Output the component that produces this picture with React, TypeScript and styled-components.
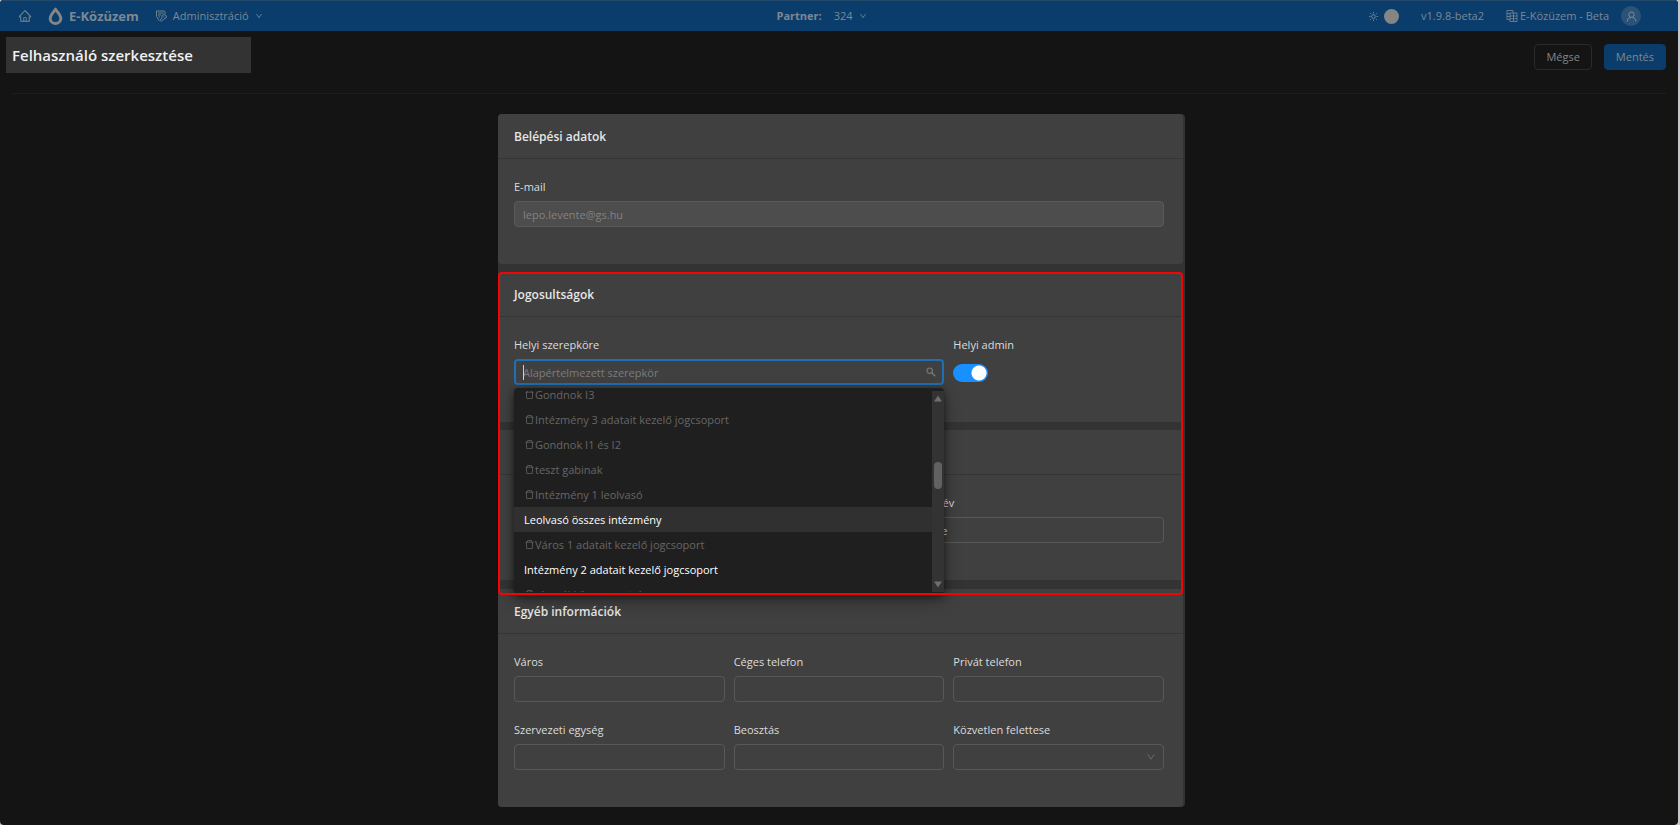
import React from "react";
import styled, { createGlobalStyle, css } from "styled-components";
import {
  AiOutlineHome,
  AiOutlineDelete,
  AiOutlineDown,
  AiOutlineUser,
} from "react-icons/ai";

const GlobalStyle = createGlobalStyle`
  *, *::before, *::after { box-sizing: border-box; }
  body {
    margin: 0;
    background: #c4c8cc;
    color: #d9d9d9;
    font: 12px/24px "Open Sans", "Noto Sans", sans-serif;
  }
  button, input, select { font: inherit; color: inherit; }
`;

const Page = styled.div`
  min-height: 100vh;
  margin-right: 2px;
  background: #141414;
  border-radius: 4px;
  overflow: hidden;
`;

const TopBar = styled.header`
  display: grid;
  grid-template-columns: 1fr auto 1fr;
  align-items: center;
  height: 31px;
  padding: 1px 37px 0 18px;
  background: #0a3d6b;
  box-shadow: inset 0 1px 0 #24496a;
  color: #7c8894;
`;

const BarGroup = styled.div<{ $gap: number; $end?: boolean }>`
  display: flex;
  align-items: center;
  gap: ${(p) => p.$gap}px;
  ${(p) => p.$end && css`justify-content: flex-end;`}
`;

const PartnerGroup = styled(BarGroup)`
  padding-right: 16px;
`;

const BarLink = styled.a`
  display: flex;
  align-items: center;
  gap: 2px;
  color: inherit;
  text-decoration: none;
  font-size: 11px;
  white-space: nowrap;
`;

const BarButton = styled.button`
  display: flex;
  align-items: center;
  gap: 6px;
  padding: 0;
  border: 0;
  background: none;
  font-size: 11px;
  line-height: 24px;
  white-space: nowrap;
`;

const Brand = styled(BarLink)`
  gap: 6px;
  font-size: 13px;
  font-weight: 700;
`;

const Avatar = styled.span`
  display: grid;
  place-items: center;
  width: 20px;
  height: 20px;
  border-radius: 50%;
  background: #2b5378;
`;

const ThemeKnob = styled.span`
  width: 15px;
  height: 15px;
  border-radius: 50%;
  background: #858585;
`;

const TitleRow = styled.div`
  display: flex;
  justify-content: space-between;
  align-items: flex-start;
  padding: 6px 12px 0 6px;
`;

const Title = styled.h1`
  width: 245px;
  margin: 0;
  padding: 0 6px;
  background: #333;
  color: #f0f0f0;
  font-size: 15px;
  line-height: 36px;
  font-weight: 600;
`;

const Actions = styled.div`
  display: flex;
  gap: 12px;
  padding-top: 7px;
`;

const ActionButton = styled.button<{ $primary?: boolean }>`
  height: 26px;
  padding: 0 11px;
  border: 1px solid ${(p) => (p.$primary ? "#0a3d6b" : "#2a2a2a")};
  border-radius: 4px;
  background: ${(p) => (p.$primary ? "#0a3d6b" : "#141414")};
  color: #838688;
  font-size: 11px;
  line-height: 24px;
`;

const Divider = styled.hr`
  height: 1px;
  margin: 20px 12px;
  border: 0;
  background: #1d1d1d;
`;

const Main = styled.main`
  padding: 0 12px 18px 17px;
`;

const FormPanel = styled.form`
  display: flex;
  flex-direction: column;
  gap: 8px;
  max-width: 687px;
  margin: 0 auto;
  padding-right: 2px;
  border-radius: 4px;
  background: #333;
`;

const Highlighted = styled.div`
  position: relative;
  display: flex;
  flex-direction: column;
  gap: 8px;
  padding-bottom: 1px;

  &::after {
    content: "";
    position: absolute;
    inset: 0 0 -14px 0;
    border: 2px solid #f40505;
    border-radius: 4px;
    pointer-events: none;
    z-index: 3;
  }
`;

const Card = styled.section`
  border-radius: 4px;
  background: #404040;
`;

const CardTitle = styled.h2`
  height: 45px;
  margin: 0;
  padding: 0 16px;
  border-bottom: 1px solid #353535;
  color: #e6e6e6;
  font-size: 12px;
  line-height: 46px;
  font-weight: 600;
`;

const Fields = styled.div<{ $columns?: string }>`
  display: grid;
  grid-template-columns: ${(p) => p.$columns ?? "repeat(3, 1fr)"};
  gap: 16px 9px;
  padding: 16px 19px 37px 16px;
`;

const Field = styled.div<{ $span?: number }>`
  position: relative;
  display: flex;
  flex-direction: column;
  gap: 2px;
  grid-column-end: span ${(p) => p.$span ?? 1};
`;

const LastField = styled(Field)`
  grid-column: 3;
`;

const Label = styled.label`
  font-size: 11px;
  line-height: 24px;
  color: #dcdcdc;
`;

const control = css`
  width: 100%;
  height: 26px;
  padding: 0 8px;
  border: 1px solid #585858;
  border-radius: 4px;
  background: #404040;
  outline: none;
  font-size: 11px;
  line-height: 24px;
`;

const TextInput = styled.input`
  ${control}
  &:disabled {
    background: #4d4d4d;
    border-color: #5a5a5a;
    color: #828282;
  }
`;

const SelectWrap = styled.div`
  display: grid;
  align-items: center;
  > * { grid-area: 1 / 1; }
  > svg {
    justify-self: end;
    margin-right: 8px;
    pointer-events: none;
    color: #777;
  }
`;

const Select = styled.select`
  ${control}
  appearance: none;
`;

const SearchInput = styled.input`
  ${control}
  border: 2px solid #1f6fb8;
  padding: 0 7px;
  line-height: 22px;
  &::placeholder { color: #7c7c7c; opacity: 1; }
`;

const Caret = styled.span`
  width: 1px;
  height: 15px;
  margin-left: 9px;
  background: #d0d0d0;
`;

const Switch = styled.input`
  appearance: none;
  width: 35px;
  height: 18px;
  margin: 5px 0 0;
  border-radius: 9px;
  background: radial-gradient(circle at 26px 9px, #fff 7px, transparent 8px) #1890ff;
`;

const Dropdown = styled.div`
  position: absolute;
  top: 55px;
  left: 0;
  right: 0;
  z-index: 2;
  display: flex;
  height: 206px;
  padding: 3px 0 2px;
  border-radius: 4px;
  background: #1f1f1f;
  box-shadow: 0 6px 16px rgba(0, 0, 0, 0.4), 0 2px 6px rgba(0, 0, 0, 0.4);
`;

const Options = styled.ul`
  flex: 1;
  display: flex;
  flex-direction: column;
  justify-content: flex-end;
  margin: 0;
  padding: 0;
  list-style: none;
  overflow: hidden;
`;

const Option = styled.li<{ $deleted?: boolean; $active?: boolean }>`
  display: flex;
  flex: none;
  align-items: center;
  height: 25px;
  padding: 0 10px;
  font-size: 11px;
  font-weight: ${(p) => (p.$deleted ? 400 : 500)};
  color: ${(p) => (p.$deleted ? "#666" : "#fff")};
  background: ${(p) => (p.$active ? "#303030" : "transparent")};

  &:last-child { margin-bottom: -15px; }
`;

const ScrollTrack = styled.div`
  display: flex;
  flex-direction: column;
  align-items: center;
  width: 12px;
  padding: 4px 0;
  background: #333;
`;

const ScrollThumb = styled.span`
  width: 8px;
  height: 27px;
  margin: 60px 0 auto;
  border-radius: 4px;
  background: #616161;
`;

const DropIcon = () => (
  <svg width="15" height="18" viewBox="0 0 15 18" aria-hidden="true">
    <path
      d="M7.5 2.2C5.600 5.200 2.200 8.300 2.200 11.400a5.300 5.100 0 0 0 10.600 0C12.800 8.300 9.400 5.200 7.500 2.200Z"
      fill="none"
      stroke="#858585"
      strokeWidth="3"
      strokeLinejoin="round"
    />
  </svg>
);

const AdminIcon = () => (
  <svg width="12" height="12" viewBox="0 0 12 12" fill="none" stroke="currentColor" strokeWidth="0.9" aria-hidden="true">
    <path d="M10 4V1.500L8.500 1H1.500v5.500L4 10.500M3 3h5.500M3 5h3M3.500 7h1.500" />
    <path d="M7 5.500 9 4.500l2.500 1.500-.5 2-2 1-3 2.500-1-1 2-3ZM8.500 6.500l1 .8" />
  </svg>
);

const SunIcon = () => (
  <svg width="9" height="9" viewBox="0 0 9 9" fill="none" stroke="currentColor" strokeWidth="0.9" aria-hidden="true">
    <circle cx="4.500" cy="4.500" r="1.800" />
    <path d="M4.500 0v1.500M4.500 7.500V9M0 4.500h1.500M7.500 4.500H9M1.200 1.200l1 1M6.800 6.800l1 1M1.200 7.800l1-1M6.800 2.200l1-1" />
  </svg>
);

const TenantIcon = () => (
  <svg width="12" height="12" viewBox="0 0 12 12" fill="none" stroke="currentColor" strokeWidth="0.8" aria-hidden="true">
    <path d="M4 9.500H1v-9h6V3M1 3.500h3M1 6.500h3M4 3h7v8.500H4ZM4 6h7M4 8.700h7M7.500 3v8.500" />
  </svg>
);

const SearchIcon = () => (
  <svg width="10" height="10" viewBox="0 0 10 10" fill="none" stroke="currentColor" aria-hidden="true">
    <circle cx="3.700" cy="3.700" r="2.700" strokeWidth="1.200" />
    <path d="M5.800 5.800 9.200 9.200" strokeWidth="1.500" />
  </svg>
);

const ArrowIcon = ({ down }: { down?: boolean }) => (
  <svg width="8" height="7" viewBox="0 0 8 7" aria-hidden="true">
    <path d={down ? "M0 0.500h8L4 6.500Z" : "M0 6.500h8L4 0.500Z"} fill="#6e6e6e" />
  </svg>
);

const roles = [
  { name: "Gondnok I3", deleted: true },
  { name: "Intézmény 3 adatait kezelő jogcsoport", deleted: true },
  { name: "Gondnok I1 és I2", deleted: true },
  { name: "teszt gabinak", deleted: true },
  { name: "Intézmény 1 leolvasó", deleted: true },
  { name: "Leolvasó összes intézmény", active: true },
  { name: "Város 1 adatait kezelő jogcsoport", deleted: true },
  { name: "Intézmény 2 adatait kezelő jogcsoport" },
  { name: "olvasói kör csoportok", deleted: true },
];

const TextField = ({ id, label, ...rest }: { id: string; label: string } & React.ComponentProps<"input">) => (
  <Field>
    <Label htmlFor={id}>{label}</Label>
    <TextInput id={id} {...rest} />
  </Field>
);

export default function App() {
  return (
    <>
      <GlobalStyle />
      <Page>
        <TopBar>
          <BarGroup $gap={16}>
            <BarLink href="#" aria-label="Kezdőlap"><AiOutlineHome size={14} /></BarLink>
            <Brand href="#"><DropIcon />E-Közüzem</Brand>
            <BarButton><AdminIcon />Adminisztráció<AiOutlineDown size={8} /></BarButton>
          </BarGroup>
          <PartnerGroup $gap={12}>
            <BarLink as="strong">Partner:</BarLink>
            <BarButton>324<AiOutlineDown size={8} /></BarButton>
          </PartnerGroup>
          <BarGroup $gap={22} $end>
            <BarButton aria-label="Téma"><SunIcon /><ThemeKnob /></BarButton>
            <BarLink href="#">v1.9.8-beta2</BarLink>
            <BarGroup $gap={12}>
              <BarLink href="#"><TenantIcon />E-Közüzem - Beta</BarLink>
              <Avatar><AiOutlineUser size={13} /></Avatar>
            </BarGroup>
          </BarGroup>
        </TopBar>

        <TitleRow>
          <Title>Felhasználó szerkesztése</Title>
          <Actions>
            <ActionButton>Mégse</ActionButton>
            <ActionButton $primary>Mentés</ActionButton>
          </Actions>
        </TitleRow>
        <Divider />

        <Main>
          <FormPanel>
            <Card>
              <CardTitle>Belépési adatok</CardTitle>
              <Fields>
                <Field $span={3}>
                  <Label htmlFor="email">E-mail</Label>
                  <TextInput id="email" type="email" defaultValue="lepo.levente@gs.hu" disabled />
                </Field>
              </Fields>
            </Card>

            <Highlighted>
              <Card>
                <CardTitle>Jogosultságok</CardTitle>
                <Fields>
                  <Field $span={2}>
                    <Label htmlFor="role">Helyi szerepköre</Label>
                    <SelectWrap>
                      <SearchInput id="role" role="combobox" aria-expanded="true" aria-controls="roles" placeholder="Alapértelmezett szerepkör" />
                      <Caret />
                      <SearchIcon />
                    </SelectWrap>
                    <Dropdown>
                      <Options id="roles" role="listbox">
                        {roles.map((r) => (
                          <Option key={r.name} role="option" aria-selected={!!r.active} $deleted={r.deleted} $active={r.active}>
                            {r.deleted && <AiOutlineDelete size={11} />}
                            {r.name}
                          </Option>
                        ))}
                      </Options>
                      <ScrollTrack>
                        <ArrowIcon />
                        <ScrollThumb />
                        <ArrowIcon down />
                      </ScrollTrack>
                    </Dropdown>
                  </Field>
                  <Field>
                    <Label htmlFor="admin">Helyi admin</Label>
                    <Switch id="admin" type="checkbox" role="switch" defaultChecked />
                  </Field>
                </Fields>
              </Card>
              <Card>
                <CardTitle />
                <Fields $columns="3fr 8fr 8fr">
                  <LastField>
                    <Label htmlFor="firstname">Keresztnév</Label>
                    <TextInput id="firstname" defaultValue="Levente" />
                  </LastField>
                </Fields>
              </Card>
            </Highlighted>

            <Card>
              <CardTitle>Egyéb információk</CardTitle>
              <Fields>
                <TextField id="city" label="Város" />
                <TextField id="workphone" label="Céges telefon" />
                <TextField id="phone" label="Privát telefon" />
                <TextField id="unit" label="Szervezeti egység" />
                <TextField id="position" label="Beosztás" />
                <Field>
                  <Label htmlFor="boss">Közvetlen felettese</Label>
                  <SelectWrap>
                    <Select id="boss"><option /></Select>
                    <AiOutlineDown size={10} />
                  </SelectWrap>
                </Field>
              </Fields>
            </Card>
          </FormPanel>
        </Main>
      </Page>
    </>
  );
}
